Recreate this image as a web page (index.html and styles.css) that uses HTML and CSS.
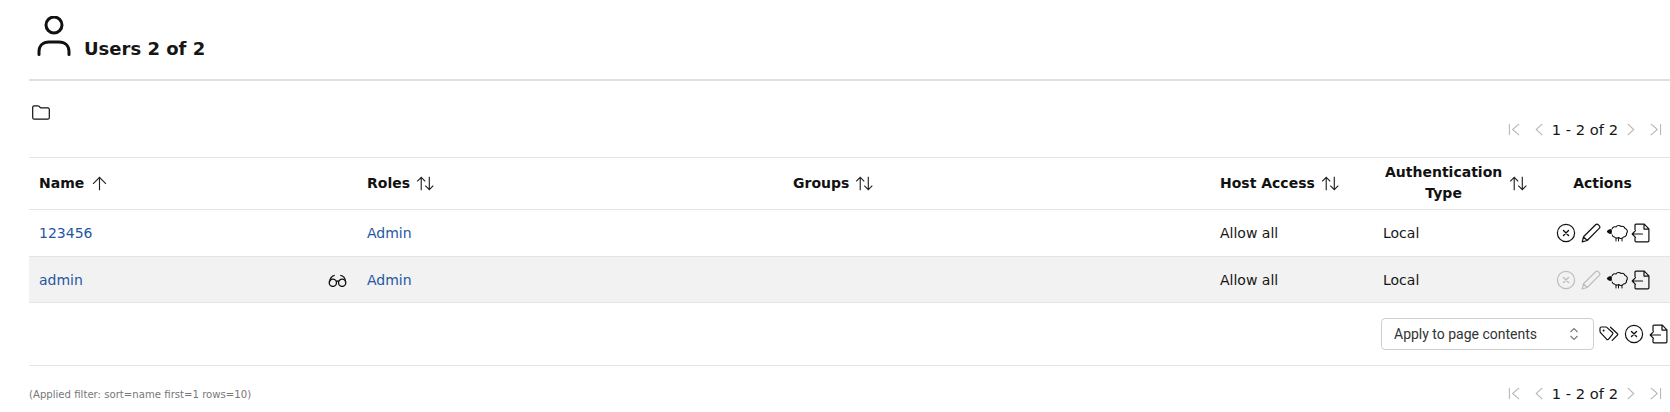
FILE: index.html
```html
<!DOCTYPE html>
<html lang="en">
<head>
<meta charset="utf-8">
<title>Users</title>
<link rel="stylesheet" href="styles.css">
</head>
<body>
<svg class="sprites" width="0" height="0" aria-hidden="true">
  <defs>
    <symbol id="i-x" viewBox="0 0 20 20"><circle cx="10" cy="10" r="8.6" fill="none" stroke="currentColor" stroke-width="1.2"/><path d="M7.5 7.500l5 5M12.500 7.500l-5 5" fill="none" stroke="currentColor" stroke-width="1.400" stroke-linecap="round"/></symbol>
    <symbol id="i-pencil" viewBox="0 0 20 20"><path d="M1.2 18.800l1.300-5L14.600 1.800c.8-.8 2-.8 2.800 0l.8.8c.8.8.8 2 0 2.800L6.200 17.500zM2.500 13.800l3.700 3.700" fill="none" stroke="currentColor" stroke-width="1.200" stroke-linejoin="round"/></symbol>
    <symbol id="i-sheep" viewBox="0 0 22 18"><path d="M6 5a3 3 0 0 1 4-2 3.200 3.200 0 0 1 5-.5 3 3 0 0 1 4 2 3 3 0 0 1 1.500 5 3 3 0 0 1-3 3.500 3.200 3.200 0 0 1-5 .5 3 3 0 0 1-4-.5A3 3 0 0 1 6 10.500" fill="none" stroke="currentColor" stroke-width="1.100" stroke-linejoin="round"/><path d="M10 14v3M12.500 14.500v2.500M16 14.500v2.500" fill="none" stroke="currentColor" stroke-width="1" stroke-linecap="round"/><path d="M.8 7.500c.6-1.300 2.400-2.600 4.600-2.500.7 1.200.7 3.800 0 5-2.200.2-4-1-4.600-2.500z" fill="currentColor"/></symbol>
    <symbol id="i-export" viewBox="0 0 20 20"><path d="M4 7V2.200c0-.6.400-1 1-1h8.300l4.600 4.600v12c0 .6-.4 1-1 1H5c-.6 0-1-.4-1-1v-3.300M13 1.400v4.700h4.800" fill="none" stroke="currentColor" stroke-width="1.200" stroke-linejoin="round"/><path d="M11.500 11H1.200M4.500 7.700L1.200 11l3.300 3.300" fill="none" stroke="currentColor" stroke-width="1.200" stroke-linecap="round" stroke-linejoin="round"/></symbol>
    <symbol id="i-tags" viewBox="0 0 20 20"><path d="M1 4.400c0-.8.600-1.400 1.400-1.400h4.400c.4 0 .7.100 1 .4l5.700 5.100c.5.500.5 1.300 0 1.800l-3.900 4.800c-.5.600-1.400.6-2 .1L2 9.200C1.300 8.600 1 8 1 7.200z" fill="none" stroke="currentColor" stroke-width="1.200" stroke-linejoin="round"/><circle cx="4.600" cy="6.400" r="1" fill="currentColor"/><path d="M11.500 3.200l7 6.500c.4.400.4.900 0 1.300l-5.300 5.300" fill="none" stroke="currentColor" stroke-width="1.200" stroke-linecap="round"/></symbol>
    <symbol id="i-both" viewBox="0 0 20 20"><path d="M5.500 17V3.500M1.300 7.700l4.200-4.200 4.200 4.200M14 3v13.500M9.800 12.300l4.200 4.200 4.200-4.200" fill="none" stroke="currentColor" stroke-width="1.200"/></symbol>
    <symbol id="i-up" viewBox="0 0 20 20"><path d="M10 17V3.500M3.200 10.300L10 3.500l6.800 6.800" fill="none" stroke="currentColor" stroke-width="1.200"/></symbol>
    <symbol id="i-first" viewBox="0 0 14 14"><path d="M1.500 1v12M12 1L5 7l7 6" fill="none" stroke="currentColor" stroke-width="1.100"/></symbol>
    <symbol id="i-prev" viewBox="0 0 14 14"><path d="M10 1L3.500 7l6.500 6" fill="none" stroke="currentColor" stroke-width="1.100"/></symbol>
    <symbol id="i-next" viewBox="0 0 14 14"><path d="M4 1l6.500 6L4 13" fill="none" stroke="currentColor" stroke-width="1.100"/></symbol>
    <symbol id="i-last" viewBox="0 0 14 14"><path d="M12.500 1v12M2 1l7 6-7 6" fill="none" stroke="currentColor" stroke-width="1.100"/></symbol>
  </defs>
</svg>

<header class="page-header">
  <svg class="user-icon" viewBox="0 0 34 42"><circle cx="17" cy="9" r="8" fill="none" stroke="currentColor" stroke-width="3"/><path d="M2 38.500v-3c0-6 4-9.500 10-9.500h10c6 0 10 3.500 10 9.500v3" fill="none" stroke="currentColor" stroke-width="3" stroke-linecap="round"/></svg>
  <h1 class="page-title">Users 2 of 2</h1>
</header>

<div class="toolbar">
  <svg class="folder-icon" viewBox="0 0 18 15"><path d="M.7 2.300c0-.9.600-1.500 1.500-1.500h3.700c.4 0 .7.100 1 .4l1.300 1.300c.2.200.5.300.8.300h6.800c.9 0 1.500.600 1.500 1.500v8.400c0 .9-.6 1.500-1.500 1.500H2.200c-.9 0-1.500-.6-1.500-1.500z" fill="none" stroke="currentColor" stroke-width="1.200"/></svg>
  <nav class="pager pager-top">
    <svg class="pg pg-first"><use href="#i-first"/></svg>
    <svg class="pg pg-prev"><use href="#i-prev"/></svg>
    <span class="pg-text">1 - 2 of 2</span>
    <svg class="pg pg-next"><use href="#i-next"/></svg>
    <svg class="pg pg-last"><use href="#i-last"/></svg>
  </nav>
</div>

<table class="users">
  <colgroup>
    <col class="c-name"><col class="c-roles"><col class="c-groups"><col class="c-host"><col class="c-auth"><col class="c-actions">
  </colgroup>
  <thead>
    <tr>
      <th><span class="th-in">Name <svg class="sort"><use href="#i-up"/></svg></span></th>
      <th><span class="th-in">Roles <svg class="sort"><use href="#i-both"/></svg></span></th>
      <th><span class="th-in">Groups <svg class="sort"><use href="#i-both"/></svg></span></th>
      <th><span class="th-in">Host Access <svg class="sort"><use href="#i-both"/></svg></span></th>
      <th class="th-auth"><span class="th-in"><span class="auth-label">Authentication<br>Type</span> <svg class="sort"><use href="#i-both"/></svg></span></th>
      <th class="th-actions">Actions</th>
    </tr>
  </thead>
  <tbody>
    <tr class="row-a">
      <td><a href="#">123456</a></td>
      <td><a href="#">Admin</a></td>
      <td></td>
      <td>Allow all</td>
      <td>Local</td>
      <td class="actions">
        <div class="action-row">
          <svg class="ai"><use href="#i-x"/></svg>
          <svg class="ai"><use href="#i-pencil"/></svg>
          <svg class="ai ai-sheep"><use href="#i-sheep"/></svg>
          <svg class="ai"><use href="#i-export"/></svg>
        </div>
      </td>
    </tr>
    <tr class="row-b">
      <td><span class="name-cell"><a href="#">admin</a><svg class="glasses" viewBox="0 0 20 14"><circle cx="5" cy="9.500" r="3.900" fill="none" stroke="currentColor" stroke-width="1.400"/><circle cx="15" cy="9.500" r="3.900" fill="none" stroke="currentColor" stroke-width="1.400"/><path d="M8.500 8c1-.6 2-.6 3 0M1.200 9C1.800 5 3.500 2 7 1.500M18.800 9C18.500 5 17 2 13 1.500" fill="none" stroke="currentColor" stroke-width="1.400"/></svg></span></td>
      <td><a href="#">Admin</a></td>
      <td></td>
      <td>Allow all</td>
      <td>Local</td>
      <td class="actions">
        <div class="action-row">
          <svg class="ai off"><use href="#i-x"/></svg>
          <svg class="ai off"><use href="#i-pencil"/></svg>
          <svg class="ai ai-sheep"><use href="#i-sheep"/></svg>
          <svg class="ai"><use href="#i-export"/></svg>
        </div>
      </td>
    </tr>
  </tbody>
</table>

<div class="bulk">
  <div class="select">
    <span>Apply to page contents</span>
    <svg class="chev" viewBox="0 0 10 16"><path d="M1.500 6L5 2.500 8.500 6M1.500 10L5 13.500 8.500 10" fill="none" stroke="currentColor" stroke-width="1.100"/></svg>
  </div>
  <svg class="ai"><use href="#i-tags"/></svg>
  <svg class="ai"><use href="#i-x"/></svg>
  <svg class="ai"><use href="#i-export"/></svg>
</div>

<footer class="foot">
  <span class="filter">(Applied filter: sort=name first=1 rows=10)</span>
  <nav class="pager">
    <svg class="pg pg-first"><use href="#i-first"/></svg>
    <svg class="pg pg-prev"><use href="#i-prev"/></svg>
    <span class="pg-text">1 - 2 of 2</span>
    <svg class="pg pg-next"><use href="#i-next"/></svg>
    <svg class="pg pg-last"><use href="#i-last"/></svg>
  </nav>
</footer>
</body>
</html>
```

FILE: styles.css
```css
* { box-sizing: border-box; }
html, body { margin: 0; padding: 0; background: #fff; }
body {
  height: 412px;
  overflow: hidden;
  padding-left: 29px;
  font-family: "DejaVu Sans", sans-serif;
  font-size: 14px;
  color: #161616;
}
.sprites { position: absolute; }

.page-header {
  display: flex;
  align-items: flex-end;
  height: 81px;
  padding: 18px 0 21px 8px;
  border-bottom: 2px solid #e0e0e0;
}
.user-icon { width: 34px; height: 42px; color: #111; flex: none; }
.page-title { margin: 0 0 -1px 13px; font-size: 18px; line-height: 20px; font-weight: 700; color: #161616; }

.toolbar {
  display: flex;
  justify-content: space-between;
  align-items: flex-start;
  height: 77px;
  padding: 24px 8px 0 3px;
  border-bottom: 1px solid #e4e4e4;
}
.folder-icon { width: 18px; height: 15px; color: #111; }

.pager { display: flex; align-items: center; height: 20px; color: #161616; }
.pager-top { margin-top: 14px; }
.pg { width: 13px; height: 13px; color: #b4b4b4; flex: none; }
.pg-first { margin-right: 12px; }
.pg-prev { margin-right: 6px; }
.pg-next { margin-left: 6px; }
.pg-last { margin-left: 12px; }
.pg-text { white-space: nowrap; font-size: 14.7px; }

.users { width: 1641px; border-collapse: collapse; table-layout: fixed; }
.c-name { width: 328px; }
.c-roles { width: 426px; }
.c-groups { width: 427px; }
.c-host { width: 163px; }
.c-auth { width: 162px; }
.c-actions { width: 135px; }
.users th {
  height: 51px;
  padding: 0 10px;
  text-align: left;
  font-weight: 700;
  line-height: 21px;
  border-bottom: 1px solid #e4e4e4;
  color: #111;
}
.th-in { display: inline-flex; align-items: center; gap: 6px; }
.users th.th-auth .th-in { gap: 7px; margin-left: 2px; }
.auth-label { text-align: center; }
.users th.th-actions { text-align: center; padding-left: 10px; padding-right: 10px; }
.sort { width: 19px; height: 19px; color: #222; flex: none; }
.users td {
  padding: 0 10px;
  border-bottom: 1px solid #e4e4e4;
  white-space: nowrap;
}
.row-a td { height: 47px; }
.row-b td { height: 46px; padding-top: 2px; background: #f2f2f2; }
.users a { color: #1f57a4; text-decoration: none; }
.name-cell { display: flex; justify-content: space-between; align-items: center; }
.glasses { width: 19px; height: 13px; color: #111; }

.users td.actions { padding-left: 21px; padding-right: 0; }
.action-row { display: flex; align-items: center; gap: 5px; }
.ai { display: block; width: 20px; height: 20px; flex: none; color: #111; }
.ai-sheep { width: 22px; height: 18px; margin-right: -2px; }
.ai.off { color: #bdbdbd; }

.bulk {
  display: flex;
  align-items: center;
  justify-content: flex-end;
  gap: 5px;
  height: 63px;
  padding-right: 1px;
  border-bottom: 1px solid #e4e4e4;
}
.select {
  display: flex;
  align-items: center;
  justify-content: space-between;
  width: 213px;
  height: 32px;
  padding: 0 14px 0 12px;
  border: 1px solid #cfcfcf;
  border-radius: 4px;
  font-family: Roboto, sans-serif;
  font-size: 14px;
  color: #333;
}
.chev { width: 10px; height: 16px; color: #777; }

.foot { display: flex; justify-content: space-between; align-items: center; height: 46px; padding: 10px 8px 0 0; }
.filter { font-size: 10.150px; color: #777; padding-top: 1px; }
```
